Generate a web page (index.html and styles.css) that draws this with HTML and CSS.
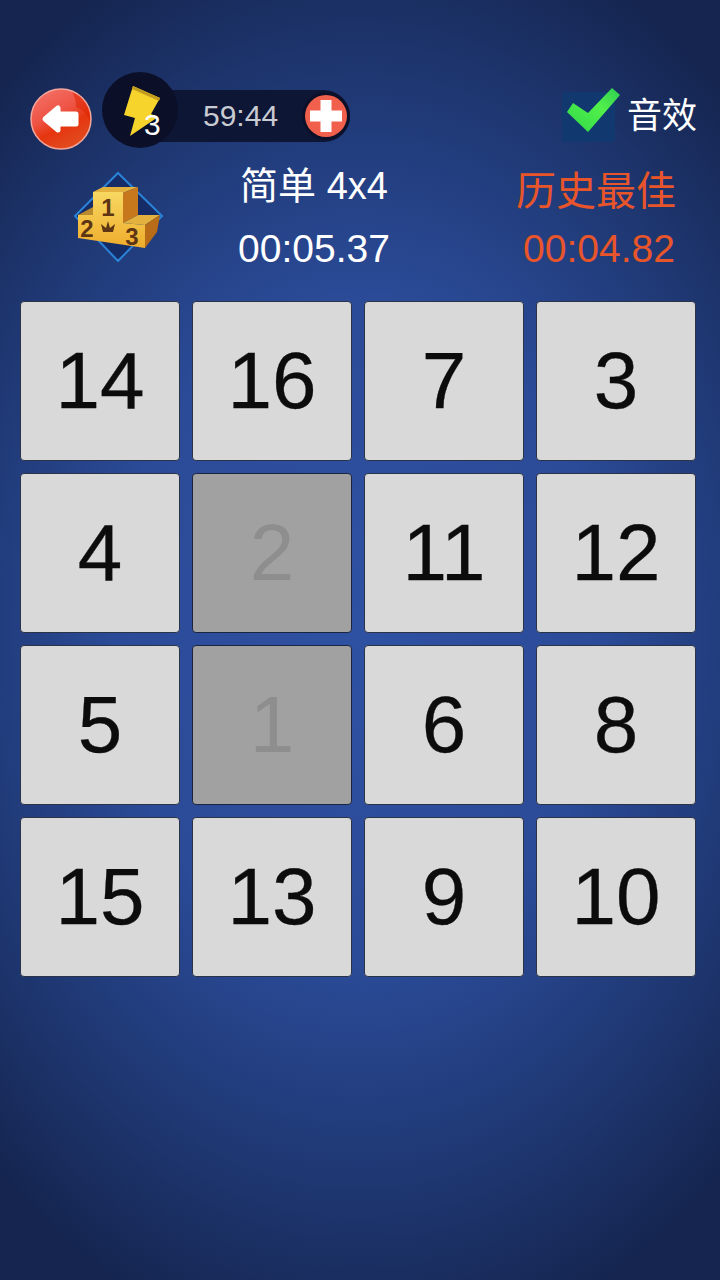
FILE: index.html
```html
<!DOCTYPE html>
<html lang="zh">
<head>
    <meta charset="UTF-8">
    <meta name="viewport" content="width=device-width, initial-scale=1.0">
    <title>数字方块</title>
    <link rel="stylesheet" href="styles.css">
</head>
<body>
    <div class="top-bar">
        <div class="top-left">
            <svg class="back-btn" width="62" height="62" viewBox="0 0 62 62">
                <defs>
                    <linearGradient id="backFill" x1="0" y1="0" x2="0.5" y2="1">
                        <stop offset="0" stop-color="#f4766c"/>
                        <stop offset="0.5" stop-color="#ee5344"/>
                        <stop offset="0.72" stop-color="#e5350f"/>
                        <stop offset="1" stop-color="#e24a1e"/>
                    </linearGradient>
                </defs>
                <circle cx="31" cy="31" r="30" fill="url(#backFill)" stroke="#f3a79c" stroke-width="1.5"/>
                <path d="M42 4 A29 29 0 0 1 60 33 Q55 22 46 19 Q46 10 42 4Z" fill="#dd2400" opacity="0.55"/>
                <path d="M15 31 L28 20 V26 H46 V36 H28 V42Z" fill="#fff" stroke="#fff" stroke-width="5" stroke-linejoin="round"/>
            </svg>
            <div class="energy">
                <div class="energy-badge">
                    <svg width="76" height="76" viewBox="0 0 76 76">
                        <path d="M31 14 L58 26 L49 42 L56 45 L28 64 L33 46 L22 43Z" fill="#f7d42c"/>
                        <path d="M31 14 L58 26 L57 29 L30 17Z" fill="#c29c1e"/>
                    </svg>
                    <span class="energy-count">3</span>
                </div>
                <div class="energy-pill">
                    <span class="energy-time">59:44</span>
                    <svg class="plus-btn" width="48" height="48" viewBox="0 0 48 48">
                        <circle cx="24" cy="24" r="24" fill="#0b1028"/>
                        <circle cx="24" cy="24" r="21" fill="#f0604c"/>
                        <path d="M24 8 V40 M8 24 H40" stroke="#fff" stroke-width="11"/>
                    </svg>
                </div>
            </div>
        </div>
        <div class="sound">
            <div class="sound-check">
                <svg width="53" height="50" viewBox="0 0 53 50">
                    <defs>
                        <linearGradient id="checkFill" x1="0" y1="1" x2="1" y2="0">
                            <stop offset="0" stop-color="#2fd84a"/>
                            <stop offset="0.6" stop-color="#52f04a"/>
                            <stop offset="1" stop-color="#2ecb55"/>
                        </linearGradient>
                    </defs>
                    <path d="M5 20 L11 11 L26 21 L50 -4 L58 3 L26 40Z" fill="url(#checkFill)"/>
                </svg>
            </div>
            <span class="sound-label">音效</span>
        </div>
    </div>

    <div class="info-row">
        <svg class="podium" width="92" height="92" viewBox="0 0 92 92">
            <defs>
                <linearGradient id="goldFace" x1="0" y1="0" x2="0" y2="1">
                    <stop offset="0" stop-color="#f8d861"/>
                    <stop offset="1" stop-color="#eeac2c"/>
                </linearGradient>
            </defs>
            <path d="M46 3 L90 46 L46 91 L3 46Z" fill="#152c66" stroke="#2a83d8" stroke-width="2"/>
            <path d="M21 22 L31 17 L66 17 L51 23Z" fill="#e2b13e"/>
            <path d="M51 23 L66 17 L66 45 L51 53Z" fill="#c8781c"/>
            <path d="M6 45 L21 37 L21 45Z" fill="#b98a2e"/>
            <path d="M51 53 L66 45 L88 45 L73 55Z" fill="#e2b13e"/>
            <path d="M73 55 L88 45 L85 62 L73 78Z" fill="#b96c18"/>
            <path d="M6 45 H21 V22 H51 V53 L73 55 V78 L6 68Z" fill="url(#goldFace)"/>
            <path d="M29 54 L34 58 L36 51 L38 58 L43 54 L41 62 H31Z" fill="#5d3514"/>
            <text class="podium-num" x="36" y="46">1</text>
            <text class="podium-num" x="15" y="67">2</text>
            <text class="podium-num" x="60" y="75">3</text>
        </svg>
        <div class="score-col current">
            <div class="score-title">简单 4x4</div>
            <div class="score-time">00:05.37</div>
        </div>
        <div class="score-col best">
            <div class="score-title">历史最佳</div>
            <div class="score-time">00:04.82</div>
        </div>
    </div>

    <div class="board">
        <div class="tile">14</div>
        <div class="tile">16</div>
        <div class="tile">7</div>
        <div class="tile">3</div>
        <div class="tile">4</div>
        <div class="tile done">2</div>
        <div class="tile">11</div>
        <div class="tile">12</div>
        <div class="tile">5</div>
        <div class="tile done">1</div>
        <div class="tile">6</div>
        <div class="tile">8</div>
        <div class="tile">15</div>
        <div class="tile">13</div>
        <div class="tile">9</div>
        <div class="tile">10</div>
    </div>
</body>
</html>
```

FILE: styles.css
```css
body {
    margin: 0;
    width: 720px;
    height: 1280px;
    overflow: hidden;
    font-family: "Liberation Sans", "Noto Sans CJK SC", sans-serif;
    background: radial-gradient(ellipse 540px 730px at 360px 630px, #2f51a2 0%, #2b4b98 45%, #1f3873 75%, #152550 100%);
}

.top-bar {
    display: flex;
    justify-content: space-between;
    height: 88px;
    padding: 72px 23px 0 30px;
}

.top-left {
    display: flex;
    align-items: flex-start;
    gap: 10px;
}

.back-btn {
    margin-top: 16px;
}

.energy {
    display: flex;
    align-items: flex-start;
}

.energy-badge {
    position: relative;
    z-index: 1;
    width: 76px;
    height: 76px;
    border-radius: 50%;
    background: #0b1028;
}

.energy-count {
    position: absolute;
    left: 42px;
    top: 36px;
    font-size: 30px;
    line-height: 34px;
    color: #fff;
}

.energy-pill {
    display: flex;
    align-items: center;
    justify-content: space-between;
    width: 147px;
    height: 52px;
    margin-top: 18px;
    margin-left: -28px;
    padding-left: 53px;
    border-radius: 0 26px 26px 0;
    background: #0e1636;
}

.energy-time {
    font-size: 30px;
    color: #c9cbd2;
}

.plus-btn {
    flex: none;
}

.sound {
    display: flex;
    align-items: flex-start;
    gap: 12px;
    margin-top: 18px;
}

.sound-check {
    width: 53px;
    height: 50px;
    margin-top: 2px;
    background: #11386f;
    border-radius: 3px;
}

.sound-check svg {
    display: block;
    overflow: visible;
}

.sound-label {
    font-size: 35px;
    line-height: 52px;
    color: #fff;
}

.info-row {
    display: flex;
    height: 141px;
}

.podium {
    margin: 10px 0 0 72px;
}

.podium-num {
    font-size: 24px;
    font-weight: bold;
    fill: #5d3514;
    text-anchor: middle;
}

.score-col {
    display: flex;
    flex-direction: column;
    align-items: center;
    text-align: center;
}

.current {
    width: 180px;
    margin-left: 60px;
    color: #fff;
}

.best {
    width: 180px;
    margin-left: 102px;
    color: #e8552a;
}

.score-title {
    height: 62px;
    font-size: 38px;
    line-height: 52px;
}

.best .score-title {
    height: 57px;
    padding-top: 5px;
    font-size: 40px;
}

.score-time {
    font-size: 39px;
    line-height: 54px;
}

.best .score-time {
    margin-left: 6px;
}

.board {
    display: grid;
    grid-template-columns: repeat(4, 160px);
    grid-auto-rows: 160px;
    gap: 12px;
    padding-left: 20px;
}

.tile {
    display: flex;
    align-items: center;
    justify-content: center;
    box-sizing: border-box;
    border: 1px solid #2b3348;
    border-radius: 4px;
    background: #d9d9d9;
    color: #0c0c0c;
    font-size: 80px;
    -webkit-text-stroke: 0.3px #0c0c0c;
}

.tile.done {
    background: #a1a1a1;
    color: #8e8e8e;
    border-color: #1c2540;
    -webkit-text-stroke: 0;
}
```
